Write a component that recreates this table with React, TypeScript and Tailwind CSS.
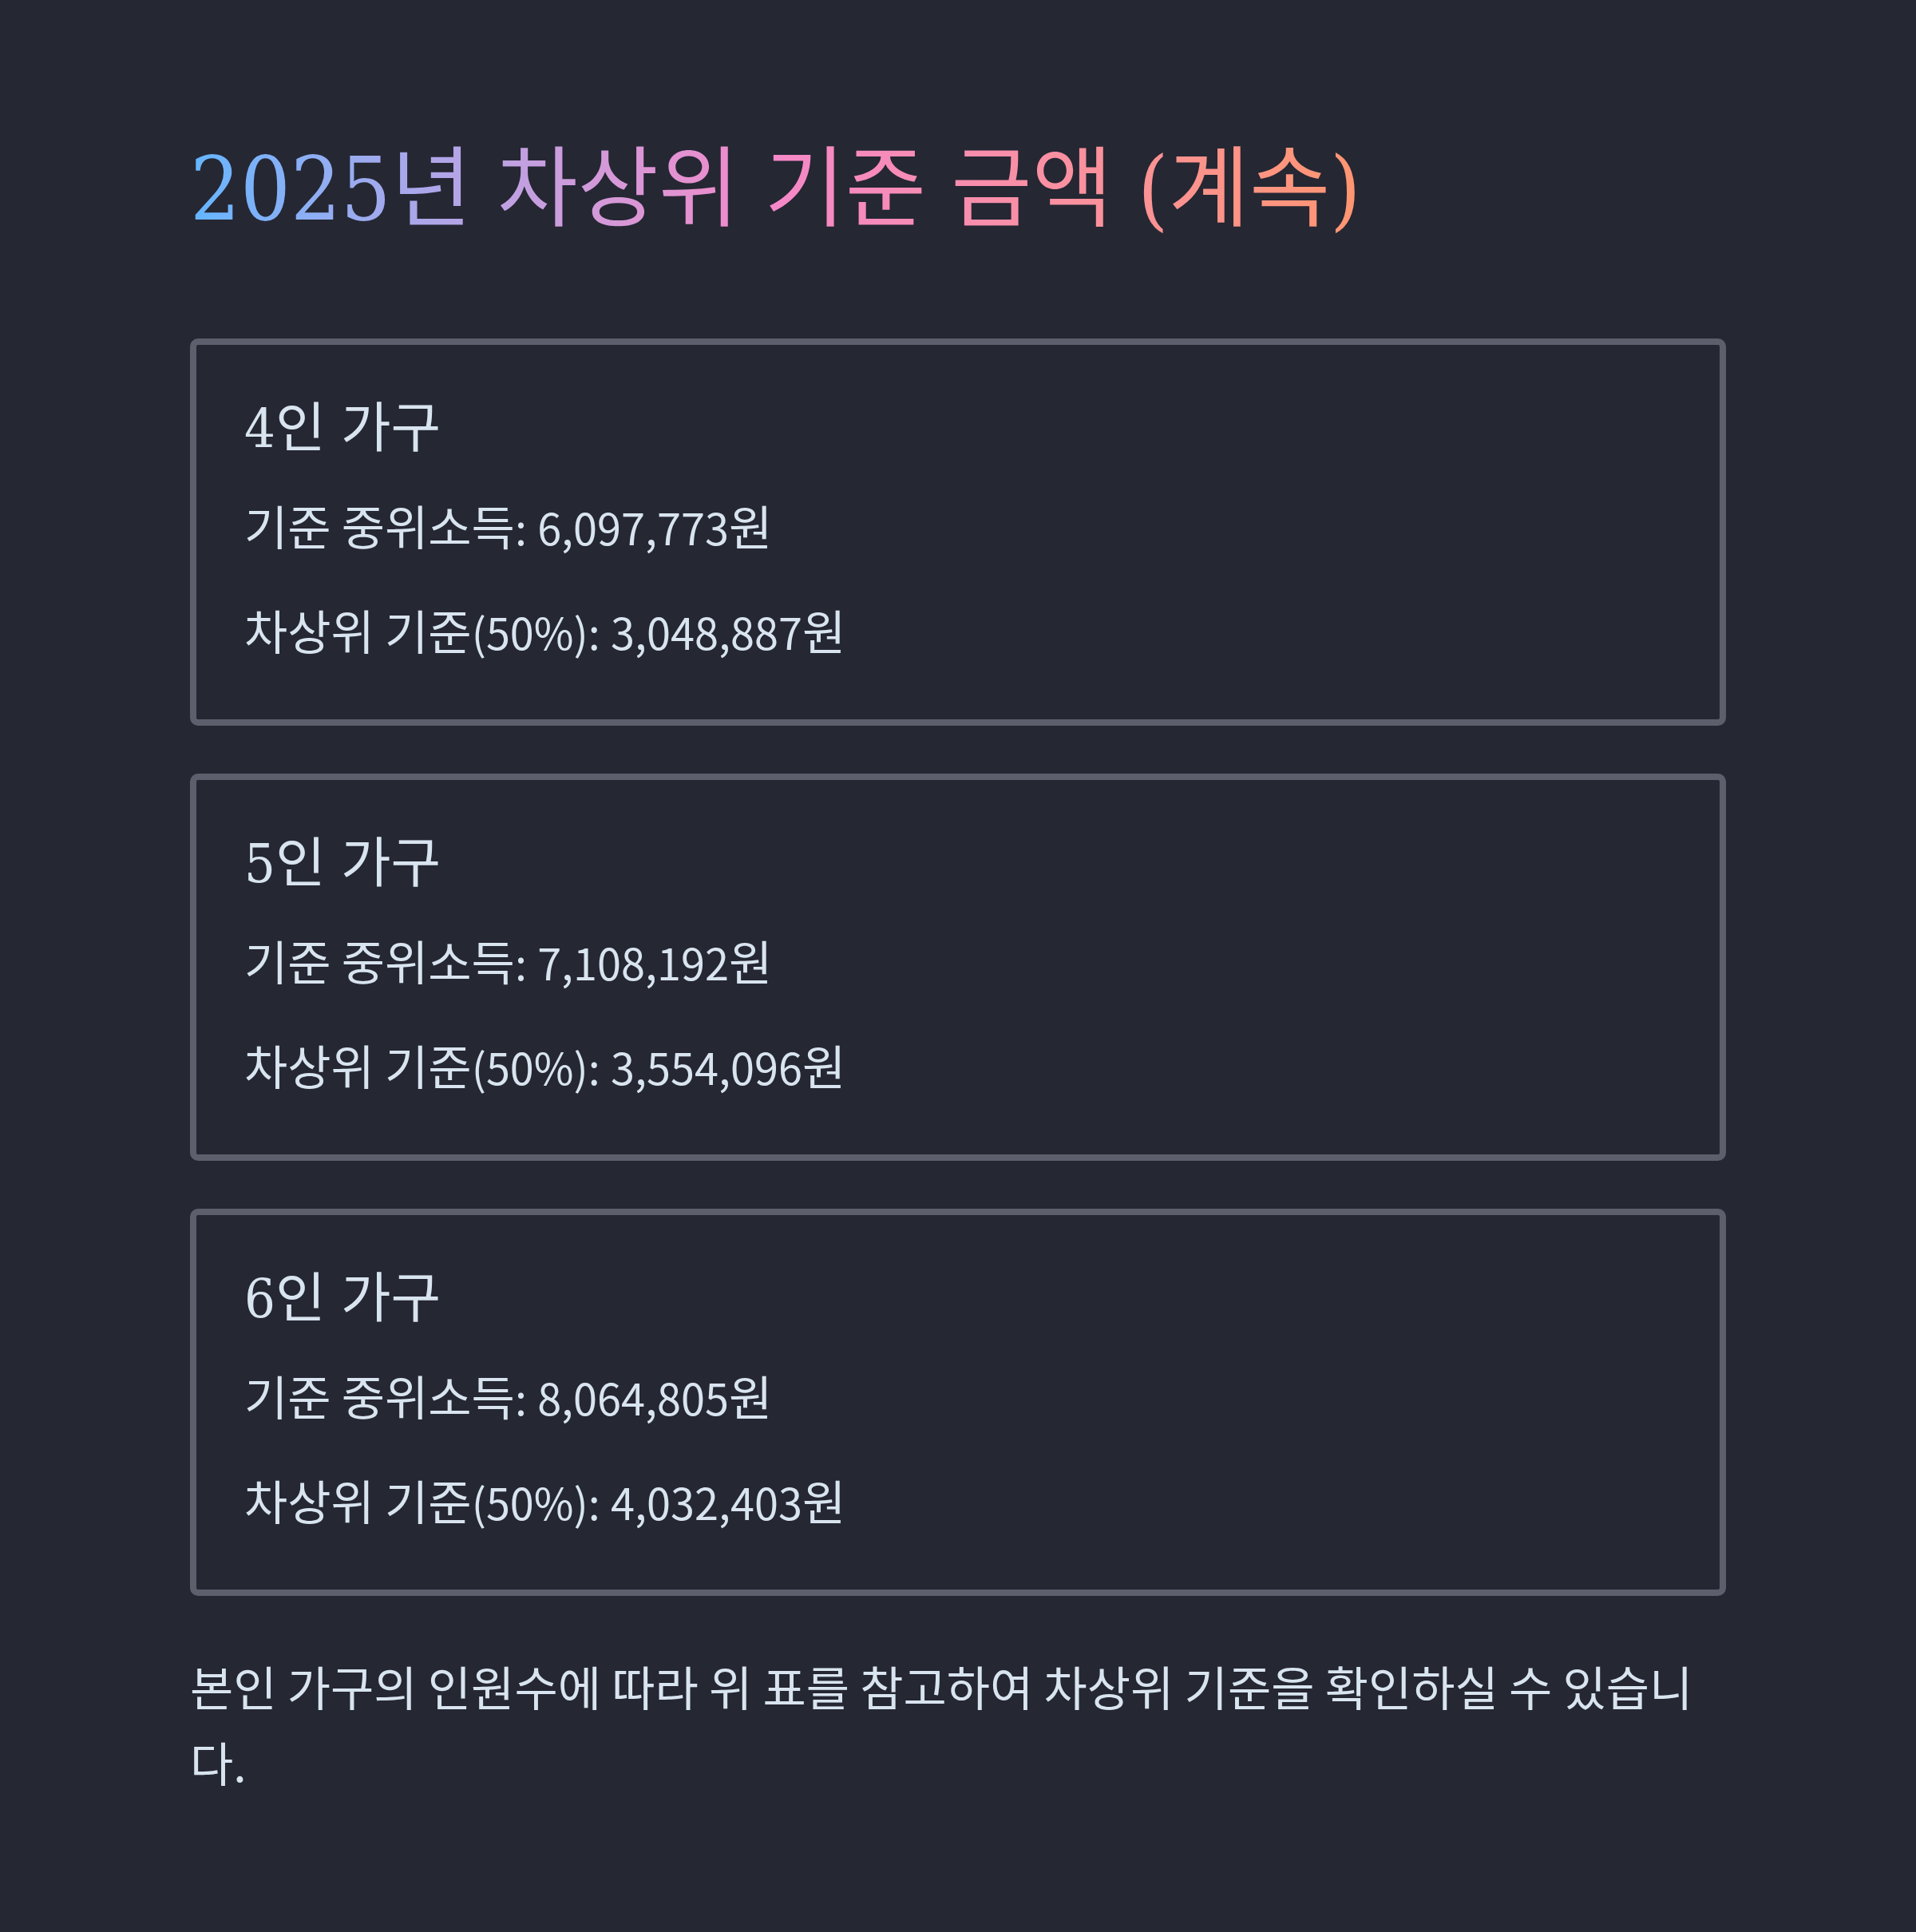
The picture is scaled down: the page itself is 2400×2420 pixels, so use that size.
const households = [
  { size: 4, median: "6,097,773", threshold: "3,048,887" },
  { size: 5, median: "7,108,192", threshold: "3,554,096" },
  { size: 6, median: "8,064,805", threshold: "4,032,403" },
];

// Hangul sits a little larger than the Latin digits in this type setting
function Mixed({ text }: { text: string }) {
  const parts = text.split(/([0-9(),.%:]+)/);
  return (
    <>
      {parts.map((part, i) =>
        i % 2 === 1 ? (
          <span key={i} className="text-[54px] leading-none">
            {part}
          </span>
        ) : (
          part
        )
      )}
    </>
  );
}

export default function App() {
  return (
    <main className="min-h-[2420px] w-full bg-[#252733] pt-[172px] pb-[160px] font-['Noto_Sans_CJK_KR',sans-serif] text-[#d8e4ef] [font-kerning:none]">
      <div className="mx-auto w-[1924px]">
        <h1 className="w-fit bg-linear-to-r from-[#63b5ff] via-[#f588c8] to-[#ff9670] bg-clip-text font-['DejaVu_Serif','Noto_Sans_CJK_KR',serif] text-[110px] leading-[130px] font-normal font-stretch-condensed text-transparent">
          2025년 차상위 기준 금액 (계속)
        </h1>

        <div className="mt-[122px] flex flex-col gap-[60px]">
          {households.map((h) => (
            <section
              key={h.size}
              className="rounded-[10px] border-[8px] border-[#5d5f6c] px-[60px] pt-[65px] pb-[65px]"
            >
              <h3 className="font-['DejaVu_Serif','Noto_Sans_CJK_KR',serif] text-[68px] leading-[80px] font-normal font-stretch-condensed">
                {h.size}인 가구
              </h3>
              <p className="mt-[33px] text-[59px] leading-[95px]">
                <Mixed text={`기준 중위소득: ${h.median}원`} />
              </p>
              <p className="mt-[36px] text-[59px] leading-[95px]">
                <Mixed text={`차상위 기준(50%): ${h.threshold}원`} />
              </p>
            </section>
          ))}
        </div>

        <p className="mt-[65px] text-[59px] leading-[95px]">
          본인 가구의 인원수에 따라 위 표를 참고하여 차상위 기준을 확인하실 수 있습니다.
        </p>
      </div>
    </main>
  );
}
